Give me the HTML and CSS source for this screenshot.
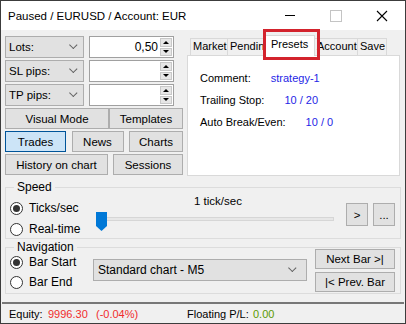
FILE: index.html
```html
<!DOCTYPE html>
<html lang="en">
  <head>
    <meta charset="UTF-8" />
    <title>Paused / EURUSD / Account: EUR</title>
    <link rel="stylesheet" href="styles.css">
  </head>
  <body>
    <div class="window">
      <div class="titlebar">
        <span class="title">Paused / EURUSD / Account: EUR</span>
        <div class="controls">
          <span class="ctl min"></span>
          <span class="ctl max"></span>
          <span class="ctl close">
            <svg width="12" height="12" viewBox="0 0 12 12"><path d="M1 1 L11 11 M11 1 L1 11" stroke="#000" stroke-width="1.1" fill="none"/></svg>
          </span>
        </div>
      </div>

      <div class="main">
        <div class="top">
          <div class="left">
            <div class="field-row">
              <div class="combo"><span>Lots:</span><i class="chev"></i></div>
              <div class="spin"><span class="val">0,50</span><div class="arrows"><b class="up"></b><b class="down"></b></div></div>
            </div>
            <div class="field-row">
              <div class="combo"><span>SL pips:</span><i class="chev"></i></div>
              <div class="spin"><span class="val"></span><div class="arrows"><b class="up"></b><b class="down"></b></div></div>
            </div>
            <div class="field-row">
              <div class="combo"><span>TP pips:</span><i class="chev"></i></div>
              <div class="spin"><span class="val"></span><div class="arrows"><b class="up"></b><b class="down"></b></div></div>
            </div>

            <div class="btn-row">
              <button class="btn w-visual">Visual Mode</button>
              <button class="btn w-templ">Templates</button>
            </div>
            <div class="btn-row">
              <button class="btn active w-trades">Trades</button>
              <button class="btn w-news">News</button>
              <button class="btn w-charts">Charts</button>
            </div>
            <div class="btn-row">
              <button class="btn w-hist">History on chart</button>
              <button class="btn w-sess">Sessions</button>
            </div>
          </div>

          <div class="tabs">
            <div class="tabstrip">
              <span class="tab t-market">Market</span>
              <span class="tab t-pending">Pending</span>
              <span class="tab selected t-presets">Presets</span>
              <span class="tab t-account">Account</span>
              <span class="tab t-save">Save</span>
            </div>
            <div class="panel">
              <div class="kv"><span>Comment:</span><span class="v">strategy-1</span></div>
              <div class="kv"><span>Trailing Stop:</span><span class="v">10 / 20</span></div>
              <div class="kv"><span>Auto Break/Even:</span><span class="v">10 / 0</span></div>
            </div>
            <div class="mark"></div>
          </div>
        </div>

        <fieldset class="group speed">
          <legend>Speed</legend>
          <div class="radios">
            <label class="radio"><i class="dot on"></i>Ticks/sec</label>
            <label class="radio"><i class="dot"></i>Real-time</label>
          </div>
          <div class="slider-box">
            <div class="rate">1 tick/sec</div>
            <div class="slider"><span class="thumb"></span><span class="track"></span></div>
          </div>
          <div class="small-btns">
            <button class="btn sq">&gt;</button>
            <button class="btn sq">...</button>
          </div>
        </fieldset>

        <fieldset class="group nav">
          <legend>Navigation</legend>
          <div class="radios">
            <label class="radio"><i class="dot on"></i>Bar Start</label>
            <label class="radio"><i class="dot"></i>Bar End</label>
          </div>
          <div class="chart-combo"><span>Standard chart - M5</span><i class="chev"></i></div>
          <div class="nav-btns">
            <button class="btn nb">Next Bar &gt;|</button>
            <button class="btn nb">|&lt; Prev. Bar</button>
          </div>
        </fieldset>
      </div>

      <div class="status">
        <span class="s-label">Equity:</span>
        <span class="red s-eq">9996.30</span>
        <span class="red s-pct">(-0.04%)</span>
        <span class="s-fl">Floating P/L:</span>
        <span class="green">0.00</span>
      </div>
    </div>
  </body>
</html>
```

FILE: styles.css
```css
* {
  box-sizing: border-box;
}

body {
  margin: 0;
  font-family: "Liberation Sans", Arial, sans-serif;
  font-size: 11px;
  color: #000;
}

.window {
  width: 406px;
  height: 324px;
  border: 1px solid #3c3c3c;
  background: #f0f0f0;
  display: flex;
  flex-direction: column;
}

/* title bar */
.titlebar {
  height: 29px;
  background: #fff;
  display: flex;
  align-items: center;
  padding-left: 7px;
}
.title {
  font-size: 11.5px;
  flex: 1;
}
.controls {
  display: flex;
  height: 100%;
}
.ctl {
  width: 46px;
  display: flex;
  align-items: center;
  justify-content: center;
}
.min::before {
  content: "";
  width: 10px;
  border-top: 1px solid #000;
}
.max::before {
  content: "";
  width: 10px;
  height: 10px;
  border: 1px solid #c4c4c4;
}

.main {
  flex: 1;
  padding: 6px 4px 0 4px;
}

.top {
  display: flex;
  gap: 4px;
}

/* left column */
.left {
  width: 178px;
}
.field-row {
  display: flex;
  gap: 5px;
  margin-bottom: 2px;
  height: 22px;
}
.field-row + .field-row {
  margin-top: 2px;
}
.combo {
  width: 79px;
  background: #e1e1e1;
  border: 1px solid #adadad;
  display: flex;
  align-items: center;
  justify-content: space-between;
  padding: 0 6px 0 3px;
  font-size: 11.5px;
}
.chev {
  width: 6px;
  height: 6px;
  border-right: 1px solid #606060;
  border-bottom: 1px solid #606060;
  transform: rotate(45deg) translate(-2px, -1px);
}
.spin {
  width: 85px;
  background: #fff;
  border: 1px solid #a0a0a0;
  display: flex;
  align-items: center;
  padding: 1px;
}
.val {
  flex: 1;
  text-align: right;
  padding-right: 2px;
  font-size: 12px;
}
.arrows {
  width: 12px;
  height: 100%;
  display: flex;
  flex-direction: column;
  gap: 1px;
}
.arrows b {
  flex: 1;
  background: #e6e6e6;
  border: 1px solid #c8c8c8;
  display: flex;
  align-items: center;
  justify-content: center;
}
.arrows b::before {
  content: "";
  border-left: 3px solid transparent;
  border-right: 3px solid transparent;
}
.up::before {
  border-bottom: 3px solid #000;
}
.down::before {
  border-top: 3px solid #000;
}

.btn-row {
  display: flex;
  justify-content: space-between;
  margin-top: 2px;
}
.btn-row:first-of-type {
  margin-top: 3px;
}
.btn {
  font-family: inherit;
  font-size: 11.5px;
  height: 21px;
  background: #e1e1e1;
  border: 1px solid #adadad;
  padding: 0;
  color: #000;
}
.btn.active {
  background: #cce4f7;
  border-color: #005499;
}
.w-visual { width: 104px; }
.w-templ { width: 74px; }
.w-trades { width: 61px; }
.w-news { width: 52px; }
.w-charts { width: 54px; }
.w-hist { width: 103px; }
.w-sess { width: 70px; }

/* tab control */
.tabs {
  flex: 1;
  position: relative;
  margin-right: 1px;
}
.tabstrip {
  display: flex;
  height: 19px;
  align-items: flex-end;
  padding-left: 3px;
}
.tab {
  height: 17px;
  border: 1px solid #d9d9d9;
  border-bottom: none;
  border-right: none;
  background: #f0f0f0;
  padding: 1px 0 0 2px;
  font-size: 11px;
  white-space: nowrap;
  overflow: hidden;
}
.t-market { width: 37px; }
.t-pending { width: 38px; overflow: visible; }
.t-account { width: 42px; }
.t-save { width: 30px; border-right: 1px solid #d9d9d9; }
.tab.selected {
  width: 51px;
  height: 21px;
  background: #fff;
  margin: 0 0 -1px -1px;
  padding: 2px 0 0 6px;
  border-right: 1px solid #d9d9d9;
  position: relative;
  z-index: 1;
}
.tab.selected + .tab {
  border-left: none;
}
.panel {
  background: #fff;
  border: 1px solid #d9d9d9;
  height: 121px;
  padding: 16px 12px 0;
}
.kv {
  display: flex;
  gap: 20px;
  height: 22px;
  font-size: 11px;
}
.kv .v {
  color: #1f1fe6;
}
.mark {
  position: absolute;
  left: 76px;
  top: -7px;
  width: 57px;
  height: 31px;
  border: 3px solid #d3232d;
  z-index: 2;
}

/* group boxes */
.group {
  margin: 4px 0 0;
  border: 1px solid #dcdcdc;
  padding: 0 5px 2px 4px;
  display: flex;
  align-items: flex-start;
}
.group legend {
  font-size: 12px;
  padding: 0 3px;
  margin-left: 4px;
}
.radios {
  display: flex;
  flex-direction: column;
  gap: 7px;
  padding-top: 2px;
}
.radio {
  display: flex;
  align-items: center;
  gap: 6px;
  font-size: 12px;
  height: 14px;
}
.dot {
  width: 13px;
  height: 13px;
  border: 1px solid #333;
  border-radius: 50%;
  background: #fff;
  display: flex;
  align-items: center;
  justify-content: center;
}
.dot.on::before {
  content: "";
  width: 7px;
  height: 7px;
  border-radius: 50%;
  background: #333;
}

.speed .radios {
  width: 86px;
  padding-top: 7px;
}
.slider-box {
  width: 238px;
}
.rate {
  text-align: center;
  font-size: 11.5px;
  padding: 1px 0 0 6px;
}
.slider {
  position: relative;
  height: 20px;
  margin-top: 5px;
}
.track {
  position: absolute;
  left: 10px;
  right: 0;
  top: 5px;
  height: 4px;
  background: #e7e7e7;
  border: 1px solid #d6d6d6;
}
.thumb {
  position: absolute;
  left: 0;
  top: 0;
  width: 11px;
  height: 19px;
  background: #0078d7;
  clip-path: polygon(0 0, 100% 0, 100% 74%, 50% 100%, 0 74%);
  z-index: 1;
}
.small-btns {
  display: flex;
  gap: 5px;
  margin-left: auto;
  padding-top: 9px;
}
.btn.sq {
  width: 22px;
  height: 23px;
}

.nav {
  margin-top: 1px;
  padding-bottom: 1px;
}
.nav .radios {
  width: 83px;
  padding-top: 1px;
  gap: 6px;
}
.chart-combo {
  width: 214px;
  height: 22px;
  margin-top: 5px;
  background: #e1e1e1;
  border: 1px solid #adadad;
  display: flex;
  align-items: center;
  justify-content: space-between;
  padding: 0 10px 0 4px;
  font-size: 12px;
}
.nav-btns {
  margin-left: auto;
  margin-top: -5px;
  display: flex;
  flex-direction: column;
  gap: 3px;
}
.btn.nb {
  width: 80px;
  height: 20px;
}

/* status bar */
.status {
  height: 21px;
  margin: 0 1px 0 1px;
  border-top: 2px solid #777;
  display: flex;
  align-items: center;
  padding-left: 7px;
  font-size: 11px;
}
.s-label { width: 39px; }
.s-eq { width: 48px; }
.s-pct { width: 91px; }
.s-fl { width: 66px; }
.red {
  color: #f02c2c;
}
.green {
  color: #5c9a00;
}
```
